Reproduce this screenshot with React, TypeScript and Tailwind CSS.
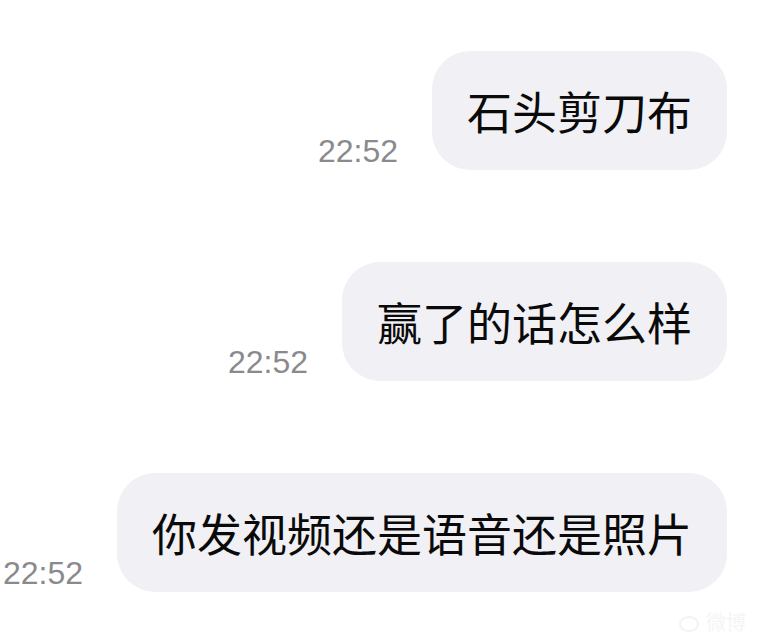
import React from "react";

const msgs = [
  { text: "石头剪刀布", time: "22:52" },
  { text: "赢了的话怎么样", time: "22:52" },
  { text: "你发视频还是语音还是照片", time: "22:52" },
];

export default function App() {
  return (
    <div className="relative w-[758px] h-[642px] bg-white overflow-hidden">
      <div className="flex flex-col items-end gap-[92px] pt-[51px] pr-[31px]">
        {msgs.map((m, i) => (
          <div key={i} className="flex items-end gap-[34px]">
            <span
              className="mb-[3px] text-[32px] leading-none text-[#8a8a8e]"
              style={{ fontFamily: '"Liberation Sans", Arial, sans-serif' }}
            >
              {m.time}
            </span>
            <div
              className="flex h-[119px] items-center rounded-[38px] bg-[#f0f0f5] px-[35px] text-[45px] font-normal leading-none text-[#0a0a0a]"
              style={{ fontFamily: '"Noto Sans CJK SC", "Noto Sans", sans-serif' }}
            >
              {m.text}
            </div>
          </div>
        ))}
      </div>
      <div className="absolute right-[12px] bottom-[10px] flex items-center gap-[6px] text-[#f5f5f5]">
        <svg width="22" height="20" viewBox="0 0 22 20">
          <ellipse cx="11" cy="12" rx="9" ry="7" fill="none" stroke="#f3f3f3" strokeWidth="2" />
        </svg>
        <span
          className="text-[20px] leading-none"
          style={{ fontFamily: '"Noto Sans CJK SC", sans-serif' }}
        >
          微博
        </span>
      </div>
    </div>
  );
}
